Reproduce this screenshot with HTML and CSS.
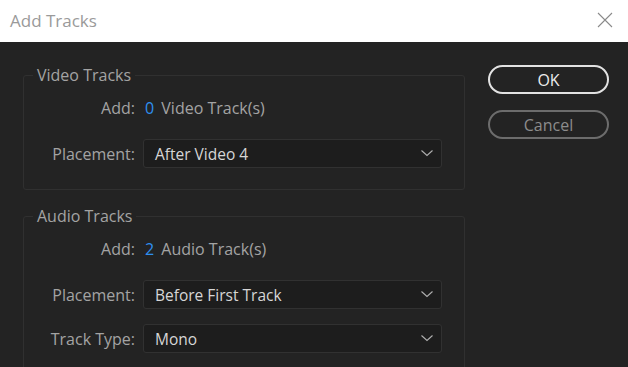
FILE: index.html
```html
<!DOCTYPE html>
<html lang="en">
<head>
  <meta charset="UTF-8">
  <title>Add Tracks</title>
  <link rel="stylesheet" href="styles.css">
</head>
<body>

<!-- Title bar -->
<div class="titlebar">
  <div class="title">Add Tracks</div>
  <svg class="close" width="16" height="16" viewBox="0 0 16 16">
    <path d="M1 1 L15 15 M15 1 L1 15" stroke="#8a8a8a" stroke-width="1.1" fill="none"/>
  </svg>
</div>

<div class="content">
  <div class="groups">

    <fieldset class="group">
      <legend>Video Tracks</legend>
      <div class="row add-row">
        <span class="label">Add:</span>
        <span class="value"><span class="count">0</span> Video Track(s)</span>
      </div>
      <div class="row">
        <span class="label">Placement:</span>
        <div class="dropdown">
          <span>After Video 4</span>
          <svg width="12" height="7" viewBox="0 0 12 7"><polyline points="0.5,0.5 6,5.5 11.5,0.5" stroke="#b0b0b0" stroke-width="1.1" fill="none"/></svg>
        </div>
      </div>
    </fieldset>

    <fieldset class="group">
      <legend>Audio Tracks</legend>
      <div class="row add-row">
        <span class="label">Add:</span>
        <span class="value"><span class="count">2</span> Audio Track(s)</span>
      </div>
      <div class="row">
        <span class="label">Placement:</span>
        <div class="dropdown">
          <span>Before First Track</span>
          <svg width="12" height="7" viewBox="0 0 12 7"><polyline points="0.5,0.5 6,5.5 11.5,0.5" stroke="#b0b0b0" stroke-width="1.1" fill="none"/></svg>
        </div>
      </div>
      <div class="row tight">
        <span class="label">Track Type:</span>
        <div class="dropdown">
          <span>Mono</span>
          <svg width="12" height="7" viewBox="0 0 12 7"><polyline points="0.5,0.5 6,5.5 11.5,0.5" stroke="#b0b0b0" stroke-width="1.1" fill="none"/></svg>
        </div>
      </div>
    </fieldset>

  </div>

  <div class="buttons">
    <button class="btn ok">OK</button>
    <button class="btn cancel">Cancel</button>
  </div>
</div>

</body>
</html>
```

FILE: styles.css
```css
body {
  margin: 0;
  background-color: #232323;
  font-family: 'Open Sans', sans-serif;
  overflow: hidden;
  height: 100vh;
}

/* White window title bar */
.titlebar {
  height: 42px;
  background-color: #ffffff;
  display: flex;
  align-items: center;
  justify-content: space-between;
  padding: 0 15px 0 10px;
}

.title {
  font-family: 'Open Sans', sans-serif;
  font-size: 17px;
  color: #9a9a9a;
  margin-top: -2px;
}

.close {
  margin-top: -2px;
}

.content {
  display: flex;
  gap: 23px;
  padding: 23px 0 0 23px;
}

.groups {
  display: flex;
  flex-direction: column;
  gap: 16px;
}

/* Group boxes drawn with fieldset/legend */
.group {
  width: 442px;
  box-sizing: border-box;
  margin: 0;
  border: 1px solid #303030;
  border-radius: 3px;
  padding: 0 22px 21px 0;
}

.group legend {
  margin-left: 9px;
  padding: 0 4px;
  font-size: 16px;
  line-height: 20px;
  color: #a3a3a3;
}

.row {
  display: flex;
  align-items: center;
  margin-top: 21px;
}

.row.add-row {
  margin-top: 13px;
  height: 20px;
}

.row.tight {
  margin-top: 15px;
}

.label {
  width: 111px;
  text-align: right;
  font-size: 16px;
  color: #a3a3a3;
  margin-right: 8px;
}

.value {
  font-size: 16px;
  color: #a3a3a3;
  padding-left: 2px;
}

.count {
  color: #2e8ff0;
  margin-right: 3px;
}

.dropdown {
  width: 299px;
  height: 29px;
  box-sizing: border-box;
  background-color: #1d1d1d;
  border: 1px solid #313131;
  border-radius: 3px;
  display: flex;
  align-items: center;
  justify-content: space-between;
  padding: 0 8px 0 11px;
  font-size: 15.5px;
  color: #d6d6d6;
}

.buttons {
  display: flex;
  flex-direction: column;
  gap: 16px;
}

.btn {
  width: 121px;
  height: 29px;
  border-radius: 15px;
  background: transparent;
  font-family: 'Open Sans', sans-serif;
  font-size: 16px;
  padding: 0;
}

.ok {
  border: 2px solid #e2e2e2;
  color: #ececec;
}

.cancel {
  border: 2px solid #6c6c6c;
  color: #8c8c8c;
}
```
